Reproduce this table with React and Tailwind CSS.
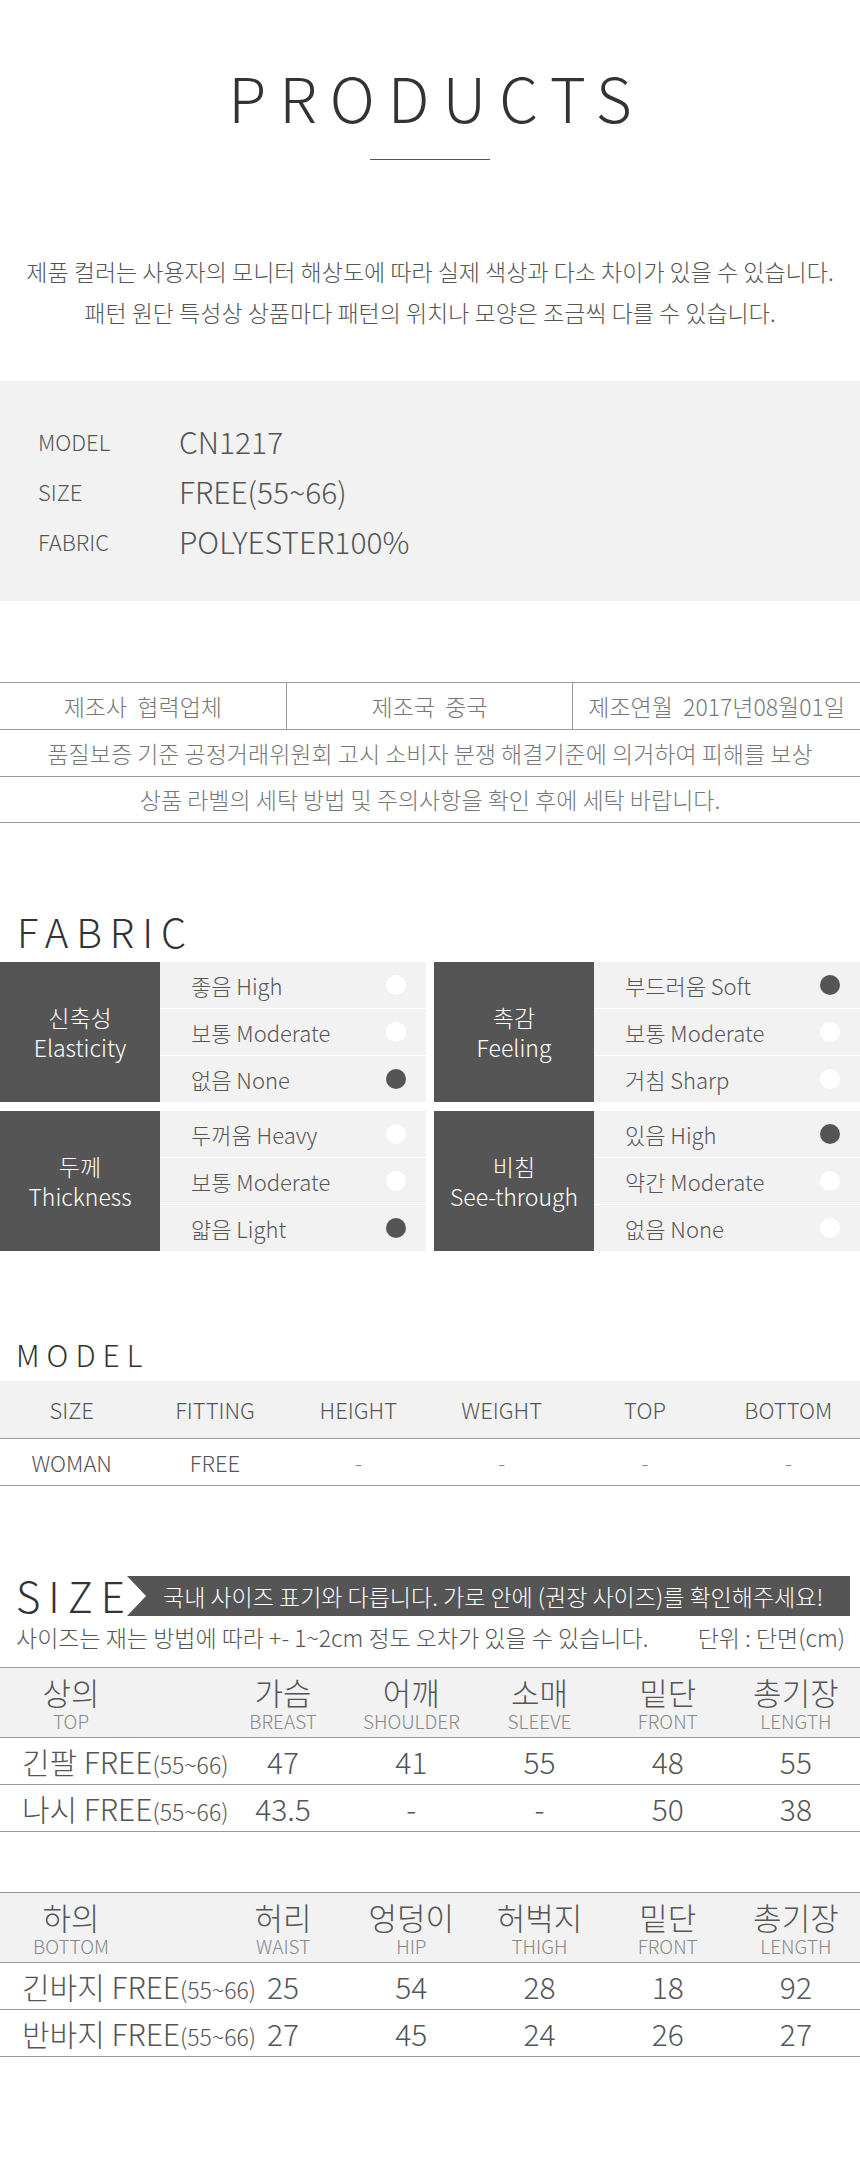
import React from 'react';

const fabricGroups = [
  { ko: '신축성', en: 'Elasticity', rows: [['좋음 High', false], ['보통 Moderate', false], ['없음 None', true]] },
  { ko: '촉감', en: 'Feeling', rows: [['부드러움 Soft', true], ['보통 Moderate', false], ['거침 Sharp', false]] },
  { ko: '두께', en: 'Thickness', rows: [['두꺼움 Heavy', false], ['보통 Moderate', false], ['얇음 Light', true]] },
  { ko: '비침', en: 'See-through', rows: [['있음 High', true], ['약간 Moderate', false], ['없음 None', false]] },
];

const topRows = [
  ['긴팔', '47', '41', '55', '48', '55'],
  ['나시', '43.5', '-', '-', '50', '38'],
];

const bottomRows = [
  ['긴바지', '25', '54', '28', '18', '92'],
  ['반바지', '27', '45', '24', '26', '27'],
];

function SizeTable({ head, rows, className }) {
  return (
    <div className={'border-t border-[#999] ' + className}>
      <div className="grid grid-cols-[219px_repeat(5,1fr)] h-[70px] bg-[#f2f2f2] border-b border-[#999]">
        {head.map(([ko, en], i) => (
          <div key={en} className={i === 0 ? 'w-[142px] flex flex-col items-center pt-[8px]' : 'flex flex-col items-center pt-[8px]'}>
            <span className="text-[31px] leading-[32px] text-[#555]">{ko}</span>
            <span className="mt-[3px] text-[19px] leading-[20px] text-[#888]">{en}</span>
          </div>
        ))}
      </div>
      {rows.map((r) => (
        <div key={r[0]} className="grid grid-cols-[219px_repeat(5,1fr)] h-[47px] border-b border-[#999] items-center">
          <div className="pl-[22px] flex items-baseline whitespace-nowrap text-[#555]">
            <span className="text-[30px] leading-[40px]">{r[0]} FREE</span>
            <span className="text-[23px]">(55~66)</span>
          </div>
          {r.slice(1).map((v, i) => (
            <div key={i} className="text-center text-[30px] leading-[40px] text-[#555]">{v}</div>
          ))}
        </div>
      ))}
    </div>
  );
}

export default function App() {
  return (
    <div className="w-[860px] bg-white text-[#555] font-['Noto_Sans_CJK_KR','Noto_Sans',sans-serif] font-light pb-[100px]">
      {/* title */}
      <div className="pt-[60px] flex flex-col items-center">
        <h1 className="text-[62px] leading-[72px] tracking-[13px] pl-[13px] font-extralight text-[#333]">PRODUCTS</h1>
        <div className="mt-[27px] w-[120px] h-px bg-[#555]" />
      </div>

      <div className="mt-[91px] text-center text-[23px] leading-[41px] text-[#555]">
        <p>제품 컬러는 사용자의 모니터 해상도에 따라 실제 색상과 다소 차이가 있을 수 있습니다.</p>
        <p>패턴 원단 특성상 상품마다 패턴의 위치나 모양은 조금씩 다를 수 있습니다.</p>
      </div>

      {/* spec box */}
      <div className="mt-[48px] bg-[#f2f2f2] py-[35px] pl-[38px]">
        {[['MODEL', 'CN1217'], ['SIZE', 'FREE(55~66)'], ['FABRIC', 'POLYESTER100%']].map(([k, v]) => (
          <div key={k} className="flex items-center h-[50px]">
            <span className="w-[141px] text-[22px] text-[#555]">{k}</span>
            <span className="text-[30px] text-[#555]">{v}</span>
          </div>
        ))}
      </div>

      {/* maker info */}
      <div className="mt-[81px] border-t border-[#999] text-[23px] text-[#777]">
        <div className="grid grid-cols-3 h-[47px] border-b border-[#999]">
          <div className="flex items-center justify-center border-r border-[#999]">제조사&nbsp; 협력업체</div>
          <div className="flex items-center justify-center border-r border-[#999]">제조국&nbsp; 중국</div>
          <div className="flex items-center justify-center whitespace-nowrap">제조연월&nbsp; 2017년08월01일</div>
        </div>
        <div className="h-[47px] flex items-center justify-center border-b border-[#999]">
          품질보증 기준 공정거래위원회 고시 소비자 분쟁 해결기준에 의거하여 피해를 보상
        </div>
        <div className="h-[46px] flex items-center justify-center border-b border-[#999]">
          상품 라벨의 세탁 방법 및 주의사항을 확인 후에 세탁 바랍니다.
        </div>
      </div>

      {/* fabric */}
      <h2 className="mt-[88px] pl-[17px] text-[40px] leading-[40px] tracking-[8px] font-extralight text-[#333]">FABRIC</h2>
      <div className="mt-[11px] grid grid-cols-2 gap-x-[8px] gap-y-[9px]">
        {fabricGroups.map((g) => (
          <div key={g.en} className="flex h-[140px]">
            <div className="w-[160px] bg-[#555] flex flex-col items-center justify-center text-white text-[23px] leading-[30px]">
              <span>{g.ko}</span>
              <span>{g.en}</span>
            </div>
            <div className="flex-1 flex flex-col gap-px">
              {g.rows.map(([label, on]) => (
                <div key={label} className="flex-1 bg-[#f2f2f2] flex items-center justify-between pl-[31px] pr-[20px]">
                  <span className="text-[22px] text-[#555]">{label}</span>
                  <span className={on ? 'w-[20px] h-[20px] rounded-full bg-[#555]' : 'w-[20px] h-[20px] rounded-full bg-white'} />
                </div>
              ))}
            </div>
          </div>
        ))}
      </div>

      {/* model */}
      <h2 className="mt-[88px] pl-[16px] text-[30px] leading-[30px] tracking-[7px] font-extralight text-[#333]">MODEL</h2>
      <div className="mt-[12px] text-[22px] text-[#555]">
        <div className="grid grid-cols-6 h-[58px] bg-[#f2f2f2] border-b border-[#999] items-center text-center">
          {['SIZE', 'FITTING', 'HEIGHT', 'WEIGHT', 'TOP', 'BOTTOM'].map((h) => (
            <span key={h}>{h}</span>
          ))}
        </div>
        <div className="grid grid-cols-6 h-[47px] border-b border-[#999] items-center text-center">
          {['WOMAN', 'FREE', '-', '-', '-', '-'].map((h, i) => (
            <span key={i} className={h === '-' ? 'text-[#888]' : ''}>{h}</span>
          ))}
        </div>
      </div>

      {/* size */}
      <div className="mt-[90px] flex items-start pr-[10px]">
        <div className="w-[127px] pl-[16px] -mt-[2px] text-[42px] leading-[42px] tracking-[8px] font-extralight text-[#333]">SIZE</div>
        <div className="flex-1 h-[40px] bg-[#555] flex items-center pl-[36px] text-white text-[23px] whitespace-nowrap [clip-path:polygon(0_0,100%_0,100%_100%,0_100%,19px_50%)]">
          국내 사이즈 표기와 다릅니다. 가로 안에 (권장 사이즈)를 확인해주세요!
        </div>
      </div>
      <div className="h-[42px] flex items-center justify-between pl-[16px] pr-[15px] text-[23px] text-[#555] whitespace-nowrap">
        <span>사이즈는 재는 방법에 따라 +- 1~2cm 정도 오차가 있을 수 있습니다.</span>
        <span>단위 : 단면(cm)</span>
      </div>

      <SizeTable
        className="mt-[9px]"
        head={[['상의', 'TOP'], ['가슴', 'BREAST'], ['어깨', 'SHOULDER'], ['소매', 'SLEEVE'], ['밑단', 'FRONT'], ['총기장', 'LENGTH']]}
        rows={topRows}
      />
      <SizeTable
        className="mt-[60px]"
        head={[['하의', 'BOTTOM'], ['허리', 'WAIST'], ['엉덩이', 'HIP'], ['허벅지', 'THIGH'], ['밑단', 'FRONT'], ['총기장', 'LENGTH']]}
        rows={bottomRows}
      />
    </div>
  );
}
